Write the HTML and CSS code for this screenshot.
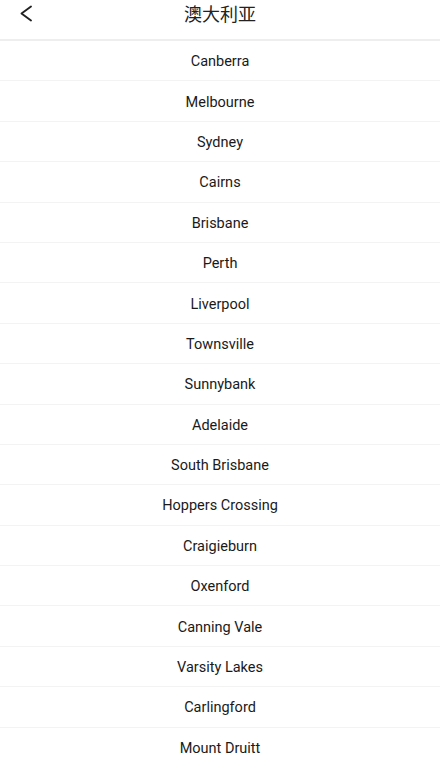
FILE: index.html
```html
<!DOCTYPE html>
<html lang="zh">
<head>
<meta charset="utf-8">
<title>澳大利亚</title>
<link rel="stylesheet" href="styles.css">
</head>
<body>
<header class="header">
  <span class="back">
    <svg width="20" height="26" viewBox="0 0 20 26"><path d="M14 6.5 L4.5 13.5 L14 20.5" fill="none" stroke="#222" stroke-width="1.9" stroke-linecap="round" stroke-linejoin="round"/></svg>
  </span>
  <h1 class="title">澳大利亚</h1>
</header>
<ul class="list">
  <li>Canberra</li>
  <li>Melbourne</li>
  <li>Sydney</li>
  <li>Cairns</li>
  <li>Brisbane</li>
  <li>Perth</li>
  <li>Liverpool</li>
  <li>Townsville</li>
  <li>Sunnybank</li>
  <li>Adelaide</li>
  <li>South Brisbane</li>
  <li>Hoppers Crossing</li>
  <li>Craigieburn</li>
  <li>Oxenford</li>
  <li>Canning Vale</li>
  <li>Varsity Lakes</li>
  <li>Carlingford</li>
  <li>Mount Druitt</li>
</ul>
</body>
</html>
```
FILE: styles.css
```css
html, body {
  margin: 0;
  padding: 0;
  background: #fff;
}
body {
  font-family: Roboto, "Noto Sans CJK SC", sans-serif;
  color: #1a1a1a;
  overflow: hidden;
}
.header {
  position: relative;
  height: 39px;
  border-bottom: 2px solid #eeeeee;
  display: flex;
  align-items: flex-start;
  justify-content: center;
}
.back {
  position: absolute;
  left: 17px;
  top: 0;
  height: 26px;
  display: flex;
  align-items: center;
}
.title {
  margin: 0;
  padding-top: 1px;
  font-size: 18px;
  font-weight: 400;
  color: #222;
  line-height: 24px;
  font-family: "Noto Sans CJK SC", sans-serif;
}
.list {
  list-style: none;
  margin: 0;
  padding: 0;
}
.list li {
  box-sizing: border-box;
  height: 40.4px;
  padding-top: 2px;
  border-bottom: 1px solid #f3f3f3;
  display: flex;
  align-items: center;
  justify-content: center;
  font-size: 14.5px;
}
```
